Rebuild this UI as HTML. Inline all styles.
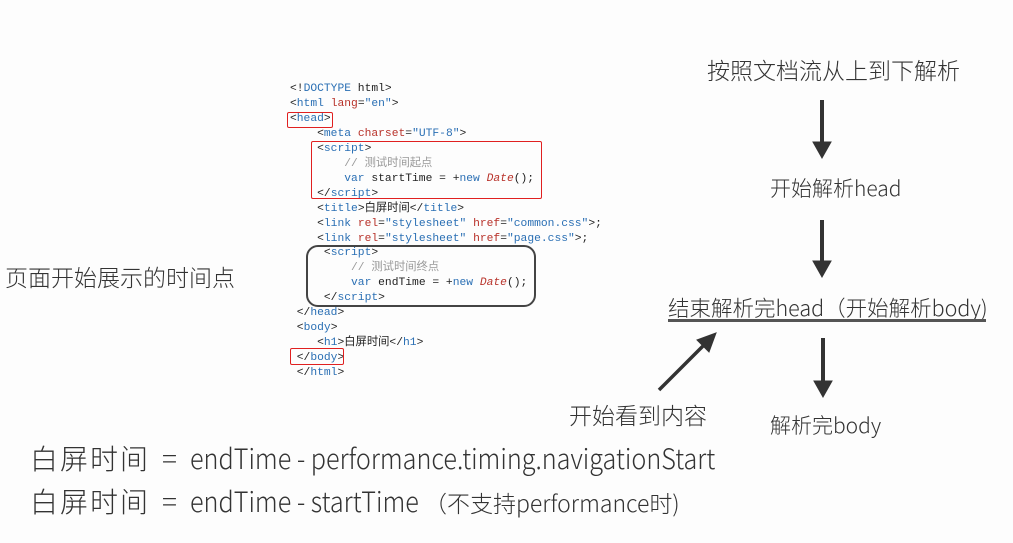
<!DOCTYPE html>
<html><head><meta charset="utf-8"><style>
body{margin:0;width:1013px;height:543px;background:#fdfdfd;position:relative;overflow:hidden;font-family:"Liberation Sans","Noto Sans CJK SC",sans-serif;color:#222}
.c{position:absolute;font-family:"Liberation Mono","Noto Sans CJK SC",monospace;font-size:11.3px;line-height:14.95px;white-space:pre;color:#222}
.t{color:#2a6fb4}.a{color:#b8322a}.s{color:#2a6fb4}.k{color:#2a6fb4}.g{color:#999}.i{font-style:italic;color:#b8322a}
.h{position:absolute;white-space:nowrap;color:#333;font-family:"Noto Sans CJK SC",sans-serif;font-weight:300}
.box{position:absolute;border:1px solid #e02020;border-radius:2px}
.sx{position:absolute;white-space:nowrap;color:#333;font-family:"Noto Sans CJK SC",sans-serif;font-weight:300;transform-origin:left top}
</style></head><body>
<div class="c" style="left:290px;top:82px">&lt;!<span class="t">DOCTYPE</span> html&gt;
&lt;<span class="t">html</span> <span class="a">lang</span>=<span class="s">"en"</span>&gt;
&lt;<span class="t">head</span>&gt;
    &lt;<span class="t">meta</span> <span class="a">charset</span>=<span class="s">"UTF-8"</span>&gt;
    &lt;<span class="t">script</span>&gt;
        <span class="g">// 测试时间起点</span>
        <span class="k">var</span> startTime = +<span class="k">new</span> <span class="i">Date</span>();
    &lt;/<span class="t">script</span>&gt;
    &lt;<span class="t">title</span>&gt;白屏时间&lt;/<span class="t">title</span>&gt;
    &lt;<span class="t">link</span> <span class="a">rel</span>=<span class="s">"stylesheet"</span> <span class="a">href</span>=<span class="s">"common.css"</span>&gt;;
    &lt;<span class="t">link</span> <span class="a">rel</span>=<span class="s">"stylesheet"</span> <span class="a">href</span>=<span class="s">"page.css"</span>&gt;;
     &lt;<span class="t">script</span>&gt;
         <span class="g">// 测试时间终点</span>
         <span class="k">var</span> endTime = +<span class="k">new</span> <span class="i">Date</span>();
     &lt;/<span class="t">script</span>&gt;
 &lt;/<span class="t">head</span>&gt;
 &lt;<span class="t">body</span>&gt;
    &lt;<span class="t">h1</span>&gt;白屏时间&lt;/<span class="t">h1</span>&gt;
 &lt;/<span class="t">body</span>&gt;
 &lt;/<span class="t">html</span>&gt;</div>
<div class="box" style="left:287px;top:112px;width:44px;height:14px"></div>
<div class="box" style="left:311px;top:141px;width:229px;height:56px"></div>
<div class="box" style="left:290px;top:348px;width:52px;height:15px"></div>
<div style="position:absolute;left:306px;top:245px;width:226px;height:58px;border:2px solid #444;border-radius:12px"></div>

<div class="h" style="left:5px;top:259px;font-size:23px">页面开始展示的时间点</div>
<div class="h" style="left:707px;top:52px;font-size:23px">按照文档流从上到下解析</div>
<div class="h" style="left:770px;top:173px;font-size:21px">开始解析head</div>
<div class="h" style="left:668px;top:292px;font-size:21.5px">结束解析完head（开始解析body)</div>
<div style="position:absolute;left:668px;top:319px;width:318px;height:3px;background:#555"></div>
<div class="h" style="left:770px;top:410px;font-size:21px">解析完body</div>
<div class="h" style="left:569px;top:397px;font-size:23px">开始看到内容</div>
<svg width="1013" height="543" style="position:absolute;left:0;top:0">
<g fill="#333" stroke="#333">
<line x1="822" y1="100" x2="822" y2="145" stroke-width="4"/><polygon points="813,142 831,142 822,158"/>
<line x1="822" y1="220" x2="822" y2="264" stroke-width="4"/><polygon points="813,261 831,261 822,277"/>
<line x1="823" y1="338" x2="823" y2="384" stroke-width="4"/><polygon points="814,381 832,381 823,397"/>
<line x1="659" y1="390" x2="705" y2="344" stroke-width="3.5"/><polygon points="716,333 697,340 709,352"/>
</g></svg>
<div class="sx" style="left:30px;top:438px;font-size:28px;letter-spacing:2px">白屏时间</div>
<div class="sx" style="left:162px;top:438px;font-size:28px">=</div>
<div class="sx" style="left:190px;top:438px;font-size:28px;transform:scaleX(0.9)">endTime - performance.timing.navigationStart</div>
<div class="sx" style="left:30px;top:481px;font-size:28px;letter-spacing:2px">白屏时间</div>
<div class="sx" style="left:162px;top:481px;font-size:28px">=</div>
<div class="sx" style="left:190px;top:481px;font-size:28px;transform:scaleX(0.9)">endTime - startTime</div>
<div class="sx" style="left:424px;top:485px;font-size:23px">（不支持performance时)</div>
</body></html>
